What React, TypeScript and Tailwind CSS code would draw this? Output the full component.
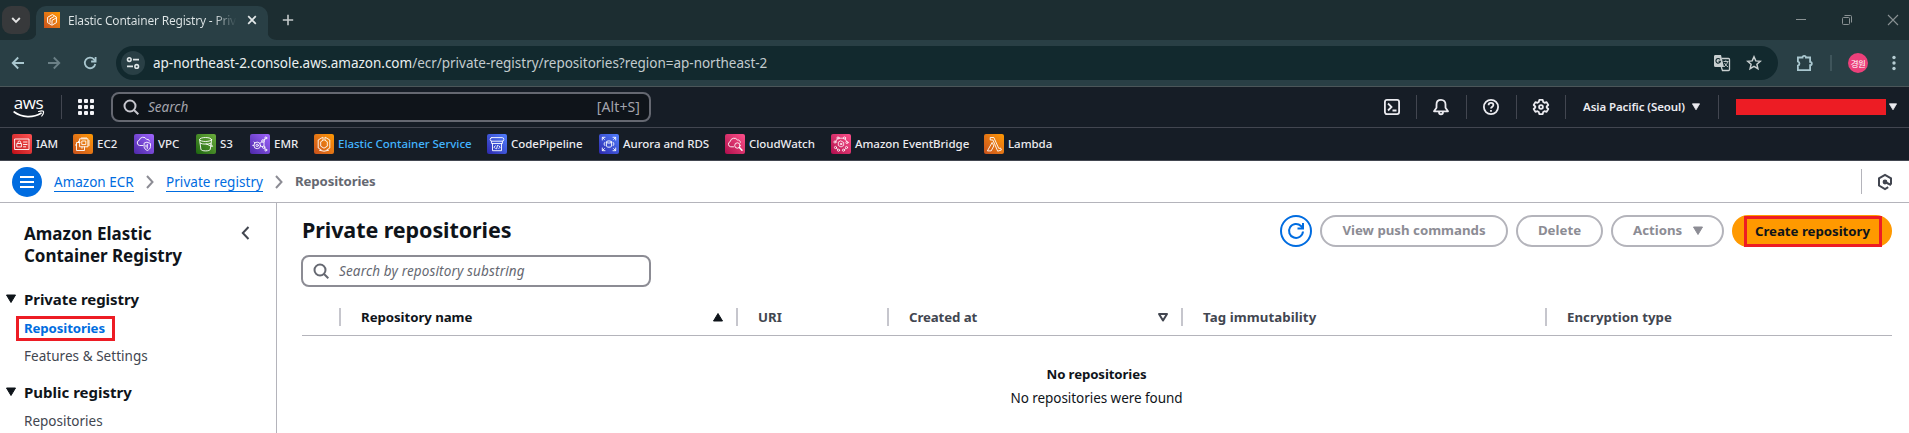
import type { ReactNode } from 'react';

const Favicon = ({ children, tone, size = 20 }: { children: ReactNode; tone: string; size?: number }) => (
  <span className={`flex shrink-0 items-center justify-center bg-linear-to-tr ${tone}`}>
    <svg width={size} height={size} viewBox="0 0 20 20" fill="none" stroke="#fff" strokeWidth="0.9" strokeLinejoin="round" strokeLinecap="round">
      {children}
    </svg>
  </span>
);

const RED = 'from-[#bd0816] to-[#ff5252] rounded-xs';
const ORANGE = 'from-[#c8511b] to-[#ff9900] rounded-xs';
const PURPLE = 'from-[#4d27a8] to-[#a166ff] rounded-xs';
const GREEN = 'from-[#1b660f] to-[#6cae3e] rounded-xs';
const BLUE = 'from-[#2e27ad] to-[#527fff] rounded-xs';
const PINK = 'from-[#b0084d] to-[#ff4f8b] rounded-xs';

const services = [
  { name: 'IAM', w: 'w-[61px]', tone: RED, icon: (
    <>
      <rect x="3" y="5" width="14" height="10.5" />
      <rect x="5.2" y="9.5" width="4.2" height="3.4" />
      <path d="M6 9.5V8.3a1.3 1.3 0 0 1 2.6 0v1.2M11.5 8h3.5M11.5 10.5h3.5M11.5 12.8h2.2" />
    </>
  ) },
  { name: 'EC2', w: 'w-[61px]', tone: ORANGE, icon: (
    <>
      <rect x="7" y="4.8" width="8" height="8" />
      <path d="M7 8.5H3.5v8h8v-3.7M9 4.8V3.4M11 4.8V3.4M13 4.8V3.4M15 7h1.6M15 9h1.6M15 11h1.6M9 12.8v1.5M5.5 8.5V7.2M3.5 11H2.4" />
      <rect x="9.2" y="7" width="3.6" height="3.6" />
    </>
  ) },
  { name: 'VPC', w: 'w-[62px]', tone: PURPLE, icon: (
    <>
      <path d="M9 11.5H5.7A2.7 2.7 0 0 1 5.3 6.2 3.9 3.9 0 0 1 12.6 5.400 2.300 2.300 0 0 1 15.500 7" />
      <path d="M13.300 8.300l3.200 1.200v3c0 2-1.500 3.200-3.200 4-1.700-.8-3.200-2-3.200-4v-3zM13.300 10.300v4.200M12 11.300v1.700" />
    </>
  ) },
  { name: 'S3', w: 'w-[54px]', tone: GREEN, icon: (
    <>
      <ellipse cx="9.600" cy="5.500" rx="6" ry="2" />
      <path d="M3.600 5.700l1.300 9.600c.2 1 2.200 1.600 4.700 1.600s4.500-.6 4.700-1.600l1.300-9.600M10 9.800l5 2.300c1.800.8 2.300.2 1-.8l-1-.6" />
      <path d="M4.200 9.200c2.500 1.300 8.300 1.300 10.900 0" />
    </>
  ) },
  { name: 'EMR', w: 'w-[64px]', tone: PURPLE, icon: (
    <>
      <circle cx="7.200" cy="11.400" r="3.300" />
      <circle cx="7.200" cy="11.400" r="1.200" />
      <circle cx="13" cy="7" r="1.300" />
      <circle cx="15.800" cy="4" r="1" />
      <circle cx="13.700" cy="13.200" r="1.200" />
      <circle cx="15.800" cy="16" r="1" />
      <path d="M9.800 9.400l2.200-1.600M14 6l1.200-1.200M10.400 12l2.200.7M14.500 14.100l.8 1M14 8.300v3.600M4 11.400H2.700M5 8.900l-.9-.9" />
    </>
  ) },
  { name: 'Elastic Container Service', w: 'w-[173px]', tone: ORANGE, active: true, icon: (
    <>
      <path d="M8.500 3.400L4.200 6v8l3 1.800M11.500 3.400L15.800 6v8l-3 1.800M5.500 16.300l4.500.9 4.500-.9" />
      <path d="M9 6.300L6.700 7.800v4.400L10 14.200l3.300-2V7.800L11 6.300M9 3.600v2.700M11 3.600v2.700" />
    </>
  ) },
  { name: 'CodePipeline', w: 'w-[112px]', tone: BLUE, icon: (
    <>
      <rect x="3.200" y="3.600" width="13.600" height="3.600" rx="1.600" />
      <path d="M4.600 7.200v2.300h10.800V7.200M5.500 9.500v7.200h9V9.500M8.300 11.800L7 13.200l1.300 1.300M11.800 11.800l1.300 1.400-1.300 1.300M10.500 11.500l-.9 3.300" />
    </>
  ) },
  { name: 'Aurora and RDS', w: 'w-[126px]', tone: BLUE, icon: (
    <>
      <path d="M3.300 6V3.300H6M3.500 3.500l1.900 1.900M14 3.300h2.700V6M16.500 3.500l-1.900 1.900M3.300 14v2.700H6M3.500 16.500l1.900-1.900M14 16.700h2.700V14M16.500 16.500l-1.900-1.900" />
      <ellipse cx="10" cy="8" rx="2.600" ry="1.100" />
      <path d="M7.400 8v4c0 .7 1.200 1.200 2.600 1.200s2.600-.5 2.600-1.200V8M5.700 8.500c-.8 1-.8 2 0 3M14.300 8.500c.8 1 .8 2 0 3" />
    </>
  ) },
  { name: 'CloudWatch', w: 'w-[106px]', tone: PINK, icon: (
    <>
      <path d="M8.500 12.800H5.700a2.700 2.700 0 0 1-.5-5.200A4 4 0 0 1 12.500 6a2.400 2.400 0 0 1 2.900 2.300" />
      <circle cx="12.400" cy="11.500" r="2.700" />
      <path d="M14.400 13.400l2.600 2.900" strokeWidth="1.500" />
    </>
  ) },
  { name: 'Amazon EventBridge', w: 'w-[153px]', tone: PINK, icon: (
    <g strokeWidth="0.8">
      <path d="M10 7l2.700 1.500v3L10 13l-2.700-1.500v-3z" />
      <circle cx="10" cy="10" r="0.800" />
      <circle cx="7" cy="4" r="1.100" /><circle cx="13.500" cy="4" r="1.100" />
      <circle cx="4" cy="8" r="1.100" /><circle cx="16" cy="8.500" r="1.100" />
      <circle cx="4.500" cy="13.500" r="1.100" /><circle cx="15.500" cy="13.500" r="1.100" />
      <circle cx="7.500" cy="16.200" r="1.100" /><circle cx="12.500" cy="16.200" r="1.100" />
      <path d="M8.100 4.200l4.300 0M4.800 7.200l1.600-2.300M15.600 7.400l-1.400-2.500M5.400 14.300l1.300 1.100M13.500 15.700l1.200-1.200" />
    </g>
  ) },
  { name: 'Lambda', w: 'w-[70px]', tone: ORANGE, icon: (
    <path d="M6.600 3.500h3.200l5 11 1.700-.5.900 2-3.700 1.200L8.900 6H6.600zM8.300 8.800l1.500 3.100-2.600 5H3.800z" />
  ) },
];

const NavDivider = () => <span className="h-[24px] w-px shrink-0 bg-[#424650]" />;

const Caret = ({ fill, size = 8, up = false }: { fill: string; size?: number; up?: boolean }) => (
  <svg width={size} height={size} viewBox="0 0 10 10" fill={fill} className="shrink-0" stroke={fill} strokeWidth="1" strokeLinejoin="round">
    <path d={up ? 'M5 1.500l4.500 7.500h-9z' : 'M.5 1h9L5 8.500z'} />
  </svg>
);

const Magnifier = ({ color }: { color: string }) => (
  <svg width="16" height="16" viewBox="0 0 16 16" fill="none" stroke={color} strokeWidth="2" className="shrink-0">
    <circle cx="7" cy="7" r="5.500" />
    <path d="M11 11l4.300 4.300" />
  </svg>
);

function BrowserChrome() {
  return (
    <div className="h-[87px] bg-[#1c2d31]">
      <div className="flex h-[40px] items-start">
        <div className="ml-[2px] mt-[6px] flex h-[28px] w-[28px] items-center justify-center rounded-[9px] bg-[#37393b]">
          <svg width="10" height="10" viewBox="0 0 10 10" fill="none" stroke="#e3e3e3" strokeWidth="1.900"><path d="M1.200 3l3.800 3.800L8.800 3" /></svg>
        </div>
        <svg width="10" height="34" className="-mr-px ml-[-3px] mt-[6px] shrink-0" viewBox="0 0 10 34"><path d="M10 24v10H0c6 0 10-4 10-10z" fill="#293f45" /></svg>
        <div className="mt-[6px] flex h-[34px] w-[232px] shrink-0 items-start rounded-t-[10px] bg-[#293f45]">
          <span className="ml-[8px] mt-[6px] flex">
            <Favicon tone="from-[#c8511b] to-[#ff9900]" size={16}>
              <g strokeWidth="1.200">
                <path d="M10 3.500L4.500 6.700v6.600L10 16.500l5.500-3.200V6.700z" />
                <path d="M7.500 13V8.500L12.500 5.700M10 15v-4.500l4.500-2.700" />
              </g>
            </Favicon>
          </span>
          <span className="ml-[8px] mt-[5px] w-[172px] overflow-hidden whitespace-nowrap bg-linear-to-r from-[#dfe6e7] from-85% to-transparent to-98% bg-clip-text text-[12px] leading-[20px] tracking-[-0.2px] text-transparent">
            Elastic Container Registry - Priv
          </span>
          <svg width="10" height="10" viewBox="0 0 10 10" className="ml-[7px] mt-[9px]" fill="none" stroke="#e3e8e9" strokeWidth="1.700"><path d="M1.200 1.200l7.600 7.600M8.800 1.200L1.200 8.800" /></svg>
        </div>
        <svg width="10" height="34" className="-ml-px mt-[6px] shrink-0" viewBox="0 0 10 34"><path d="M0 24v10h10C4 34 0 30 0 24z" fill="#293f45" /></svg>
        <svg width="12" height="12" viewBox="0 0 12 12" className="ml-[5px] mt-[14px]" fill="none" stroke="#c3c9ca" strokeWidth="1.600"><path d="M6 .8v10.400M.8 6h10.400" /></svg>
        <div className="ml-auto mr-[10px] mt-[14px] flex gap-[34px]">
          <svg width="12" height="12" viewBox="0 0 12 12" stroke="#8a9294"><path d="M1 5.500h10" /></svg>
          <svg width="12" height="12" viewBox="0 0 12 12" fill="none" stroke="#8a9294"><rect x="1.500" y="3.500" width="7" height="7" rx="1" /><path d="M3.500 1.500h6a1 1 0 0 1 1 1v6" /></svg>
          <svg width="12" height="12" viewBox="0 0 12 12" fill="none" stroke="#8a9294" strokeWidth="1.100"><path d="M1 1l10 10M11 1L1 11" /></svg>
        </div>
      </div>
      <div className="flex h-[47px] items-center border-b border-[#4b5659] bg-[#293f45]">
        <svg width="14" height="14" viewBox="0 0 14 14" className="ml-[11px]" fill="none" stroke="#a9c7cf" strokeWidth="1.800"><path d="M13 7H2M7.200 1.500L1.700 7l5.500 5.500" /></svg>
        <svg width="14" height="14" viewBox="0 0 14 14" className="ml-[22px]" fill="none" stroke="#6b8086" strokeWidth="1.800"><path d="M1 7h11M6.800 1.500L12.300 7l-5.500 5.500" /></svg>
        <svg width="14" height="14" viewBox="0 0 14 14" className="ml-[22px]" fill="none" stroke="#a9c7cf" strokeWidth="1.800"><path d="M12.300 8A5.300 5.300 0 1 1 11 3.300l1.400 1.500" /><path d="M12.600 1v4.500H8.100" /></svg>
        <div className="ml-[19px] flex h-[34px] w-[1662px] shrink-0 items-center rounded-full bg-[#12292e]">
          <span className="ml-[5px] flex h-[24px] w-[24px] items-center justify-center rounded-full bg-[#293f45]">
            <svg width="14" height="14" viewBox="0 0 14 14" fill="none" stroke="#dfe6e7" strokeWidth="1.600"><circle cx="3.300" cy="3.600" r="1.800" /><path d="M7 3.600h6M1 10.400h6" /><circle cx="10.700" cy="10.400" r="1.800" /></svg>
          </span>
          <span className="ml-[8px] whitespace-nowrap text-[13.500px] tracking-[-0.020px] text-[#c3ccce]">
            <span className="text-[#eaf0f1]">ap-northeast-2.console.aws.amazon.com</span>/ecr/private-registry/repositories?region=ap-northeast-2
          </span>
          <span className="ml-auto mr-[16px] flex items-center gap-[15px]">
            <svg width="18" height="18" viewBox="0 0 18 18">
              <path d="M2 1h6l3 12H2.500A1.500 1.500 0 0 1 1 11.500V2.500A1.500 1.500 0 0 1 2 1z" fill="#c8cfd0" />
              <path d="M9 4.500h6.500a1 1 0 0 1 1 1v10a1 1 0 0 1-1 1H9.500L8.300 13" fill="none" stroke="#c8cfd0" strokeWidth="1.300" />
              <path d="M7 5.300A2.300 2.300 0 1 0 7.500 7.200H5.500" fill="none" stroke="#12292e" strokeWidth="1.100" />
              <path d="M10.500 7.500h5M12.800 6.300v1.200M14.700 7.500c-.6 2.500-2 4.200-3.700 5.300M11.500 9c.8 1.800 2 3 3.600 4" fill="none" stroke="#c8cfd0" strokeWidth=".9" />
            </svg>
            <svg width="16" height="16" viewBox="0 0 16 16" fill="none" stroke="#c8cfd0" strokeWidth="1.500"><path d="M8 1.800l1.800 4.100 4.500.4-3.400 3 1 4.400L8 11.300l-3.900 2.400 1-4.400-3.400-3 4.500-.4z" /></svg>
          </span>
        </div>
        <svg width="18" height="18" viewBox="0 0 18 18" className="ml-[18px]" fill="none" stroke="#a9c7cf" strokeWidth="1.800"><path d="M1.900 3.500h4.600a1.700 1.700 0 0 1 3.400 0h4.200v4.300a1.700 1.700 0 0 1 0 3.400v4.900H1.900v-4.400a2.200 2.200 0 0 0 0-4.200z" /></svg>
        <span className="ml-[16px] h-[16px] w-[2px] bg-[#3f555b]" />
        <span className="ml-[16px] flex h-[20px] w-[20px] shrink-0 items-center justify-center whitespace-nowrap rounded-full bg-[#ec407a] font-['Noto_Sans_CJK_KR',sans-serif] text-[8.500px] leading-none tracking-[-0.500px] text-white">경원</span>
        <svg width="6" height="16" viewBox="0 0 6 16" className="ml-[23px]" fill="#b6cdd3"><circle cx="3" cy="2.500" r="1.700" /><circle cx="3" cy="8" r="1.700" /><circle cx="3" cy="13.500" r="1.700" /></svg>
      </div>
    </div>
  );
}

function ConsoleHeader() {
  return (
    <div className="h-[74px] bg-[#161d26] text-[#ebebf0]">
      <div className="flex h-[41px] items-center border-b border-[#424650]">
        <span className="ml-[12px] flex w-[33px] flex-col items-center">
          <span className="h-[13px] font-['Open_Sans'] text-[17px] font-medium leading-[11px] tracking-[-0.400px] text-white">aws</span>
          <svg width="32" height="8" viewBox="0 0 32 8" fill="none" stroke="#fff" strokeWidth="1.700" strokeLinecap="round"><path d="M1.200 2C9 7.700 20 8 28 3.200" /><path d="M25.600 1.500c2-.7 4-.8 4.700-.3.500.8-.3 3.200-1.500 4.800" strokeWidth="1.200" /></svg>
        </span>
        <span className="ml-[16px] mr-[16px] flex"><NavDivider /></span>
        <span className="grid grid-cols-3 gap-[2px]">
          {Array.from({ length: 9 }, (_, i) => <span key={i} className="h-[4px] w-[4px] rounded-[1px] bg-[#f3f3f7]" />)}
        </span>
        <div className="ml-[17px] flex h-[30px] w-[540px] shrink-0 items-center rounded-[8px] border-2 border-[#656871] bg-[#0f141a] pl-[10px] pr-[9px]">
          <Magnifier color="#c6c6cd" />
          <span className="ml-[9px] text-[13.500px] italic text-[#a4a4ad]">Search</span>
          <span className="ml-auto mt-[-2px] text-[14px] tracking-[0.100px] text-[#a4a4ad]">[Alt+S]</span>
        </div>
        <svg width="18" height="18" viewBox="0 0 18 18" className="ml-[732px]" fill="none" stroke="#ebebf0" strokeWidth="1.800"><rect x="1.900" y="1.900" width="14.200" height="14.200" rx="2" /><path d="M5 5.500L8.500 9 5 12.500M9.500 12.500h4" /></svg>
        <span className="mx-[15px] flex"><NavDivider /></span>
        <svg width="18" height="18" viewBox="0 0 18 18" fill="none" stroke="#ebebf0" strokeWidth="1.800" strokeLinejoin="round"><path d="M9 1.900c-2.900 0-4.500 2-4.500 4.500v3.300L2 13.300h14l-2.500-3.600V6.400C13.500 3.900 11.900 1.900 9 1.900zM7 14c0 1.500.9 2.300 2 2.300s2-.8 2-2.300" /></svg>
        <span className="ml-[16px] mr-[15px] flex"><NavDivider /></span>
        <svg width="18" height="18" viewBox="0 0 18 18" fill="none" stroke="#ebebf0" strokeWidth="1.800"><circle cx="9" cy="9" r="7.100" /><path d="M6.600 7.200c0-1.400 1-2.300 2.400-2.300s2.400.9 2.400 2.100c0 1.700-2.400 1.700-2.400 3.600M9 11.900v1.800" /></svg>
        <span className="ml-[16px] mr-[15px] flex"><NavDivider /></span>
        <svg width="18" height="18" viewBox="0 0 18 18" fill="none" stroke="#ebebf0" strokeWidth="1.800" strokeLinejoin="round"><path d="M7.300 1.900h3.400l.5 2.100 1.300.8 2.100-.7 1.700 2.900-1.600 1.500v1l1.600 1.500-1.700 2.900-2.100-.7-1.300.8-.5 2.100H7.300L6.800 14l-1.300-.8-2.100.7L1.700 11l1.600-1.500v-1L1.700 7l1.700-2.900 2.100.7L6.800 4z" /><circle cx="9" cy="9" r="1.900" /></svg>
        <span className="ml-[15px] mr-[17px] flex"><NavDivider /></span>
        <span className="w-[103px] whitespace-nowrap text-[11.500px] font-semibold tracking-[-0.090px]">Asia Pacific (Seoul)</span>
        <span className="ml-[6px]"><Caret fill="#ebebf0" /></span>
        <span className="ml-[18px] mr-[17px] flex"><NavDivider /></span>
        <span className="h-[16px] w-[150px] shrink-0 bg-[#ed1c24]" />
        <span className="ml-[3px]"><Caret fill="#ebebf0" /></span>
      </div>
      <div className="flex h-[33px] items-center border-b border-[#424650] pl-[12px]">
        {services.map((s) => (
          <span key={s.name} className={`flex shrink-0 items-center gap-[4px] ${s.w}`}>
            <Favicon tone={s.tone}>{s.icon}</Favicon>
            <span className={`whitespace-nowrap text-[11.500px] font-medium ${s.active ? 'text-[#42b4ff]' : 'text-[#ebebf0]'} tracking-[-0.030px]`}>{s.name}</span>
          </span>
        ))}
      </div>
    </div>
  );
}

const Chevron = () => (
  <svg width="8" height="14" viewBox="0 0 8 14" fill="none" stroke="#8c8c94" strokeWidth="2" className="shrink-0"><path d="M1 1l5.500 6L1 13" /></svg>
);

function Breadcrumbs() {
  return (
    <div className="flex h-[42px] items-center border-b border-[#b4b4bb] text-[13.500px] text-[#006ce0]">
      <span className="ml-[12px] flex h-[30px] w-[30px] flex-col items-center justify-center gap-[3px] rounded-full bg-[#006ce0]">
        <span className="h-[2px] w-[14px] bg-white" />
        <span className="h-[2px] w-[14px] bg-white" />
        <span className="h-[2px] w-[14px] bg-white" />
      </span>
      <a className="ml-[12px] mt-[2px] w-[80px] whitespace-nowrap border-b border-[#006ce0] leading-[18px]">Amazon ECR</a>
      <span className="ml-[12px] mr-[12px]"><Chevron /></span>
      <a className="mt-[2px] w-[97px] whitespace-nowrap border-b border-[#006ce0] leading-[18px] tracking-[0.050px]">Private registry</a>
      <span className="ml-[12px] mr-[12px]"><Chevron /></span>
      <span className="mt-px text-[13.250px] font-bold tracking-[-0.150px] text-[#656871]">Repositories</span>
      <span className="ml-auto h-[25px] w-px bg-[#b4b4bb]" />
      <svg width="16" height="18" viewBox="0 0 16 18" className="ml-[15px] mr-[16px]" fill="none" stroke="#424650" strokeWidth="2"><path d="M14 11.500V5.300L8 1.900 2 5.300v7.200l6 3.500 3.200-1.900" /><circle cx="8" cy="9" r="1.400" fill="#424650" /><path d="M8 9l6 3" /></svg>
    </div>
  );
}

function SideNav() {
  return (
    <div className="w-[277px] shrink-0 border-r border-[#b4b4bb] pl-[24px] pt-[20px]">
      <div className="flex">
        <h2 className="w-[217px] whitespace-nowrap text-[17px] font-bold leading-[22px] text-[#0f141a]">
          Amazon Elastic<br /><span className="tracking-[-0.050px]">Container Registry</span>
        </h2>
        <svg width="9" height="14" viewBox="0 0 9 14" className="mt-[3px]" fill="none" stroke="#424650" strokeWidth="2"><path d="M7.500 1L1.800 7l5.700 6" /></svg>
      </div>
      <div className="ml-[-18px] mt-[22px] flex h-[20px] items-center">
        <Caret fill="#0f141a" size={10} />
        <h3 className="ml-[8px] text-[15px] font-bold tracking-[-0.060px] text-[#0f141a]">Private registry</h3>
      </div>
      <div className="ml-[-8px] mt-[7px] flex h-[25px] w-[99px] items-center border-[3px] border-[#ed1c24] pl-[5px]">
        <span className="text-[13.250px] font-bold tracking-[-0.120px] text-[#006ce0]">Repositories</span>
      </div>
      <div className="mt-[5px] text-[13.500px] leading-[20px] tracking-[0.040px] text-[#424650]">Features &amp; Settings</div>
      <div className="ml-[-18px] mt-[16px] flex h-[20px] items-center">
        <Caret fill="#0f141a" size={10} />
        <h3 className="ml-[8px] text-[15px] font-bold text-[#0f141a]">Public registry</h3>
      </div>
      <div className="mt-[9px] h-[20px] text-[13.500px] leading-[20px] text-[#424650]">Repositories</div>
    </div>
  );
}

const Sep = () => <span className="mb-px h-[18px] w-[2px] shrink-0 bg-[#c6c6cd]" />;

function Repositories() {
  return (
    <div className="ml-[24px] w-[1591px]">
      <div className="mt-[12px] flex h-[32px] w-full items-center text-[13.250px] font-bold text-[#8c8c94]">
        <h1 className="ml-px mt-[-2px] w-[978px] whitespace-nowrap text-[21.500px] leading-[32px] tracking-[-0.080px] text-[#0f141a]">Private repositories</h1>
        <span className="flex h-[32px] w-[32px] shrink-0 items-center justify-center rounded-full border-2 border-[#006ce0]">
          <svg width="18" height="18" viewBox="0 0 18 18" fill="none" stroke="#006ce0" strokeWidth="2"><path d="M16 9.500a7 7 0 1 1-2-5.500l1.800 2" /><path d="M16 1v5.500h-5.500" /></svg>
        </span>
        <span className="ml-[8px] flex h-[32px] w-[188px] shrink-0 items-center justify-center rounded-full border-2 border-[#b4b4bb]">View push commands</span>
        <span className="ml-[8px] flex h-[32px] w-[87px] shrink-0 items-center justify-center rounded-full border-2 border-[#b4b4bb]">Delete</span>
        <span className="ml-[8px] flex h-[32px] w-[113px] shrink-0 items-center rounded-full border-2 border-[#b4b4bb] pl-[20px]">
          Actions
          <span className="ml-[11px]"><Caret fill="#8c8c94" size={10} /></span>
        </span>
        <span className="ml-[8px] flex h-[32px] w-[160px] shrink-0 items-center rounded-full bg-[#ff9900] pl-[12px] text-[#0f141a]">
          <span className="mt-px flex h-[31px] w-[138px] items-center justify-center border-[3px] border-[#ed1c24] pr-px tracking-[-0.020px]">Create repository</span>
        </span>
      </div>
      <div className="mt-[8px] flex h-[32px] w-[350px] items-center rounded-[8px] border-2 border-[#8c8c94] pl-[10px]">
        <Magnifier color="#656871" />
        <span className="ml-[10px] text-[13.500px] italic tracking-[0.150px] text-[#656871]">Search by repository substring</span>
      </div>
      <div className="ml-px mt-[12px] flex h-[37px] items-center border-b border-[#b4b4bb] pl-[37px] text-[13.250px] font-bold text-[#424650]">
        <span className="flex h-full w-[397px] items-center">
          <Sep />
          <span className="ml-[20px] mt-px tracking-[-0.060px] text-[#0f141a]">Repository name</span>
          <span className="ml-auto mr-[13px]"><Caret fill="#0f141a" size={10} up /></span>
        </span>
        <span className="flex h-full w-[151px] items-center"><Sep /><span className="ml-[20px] mt-px">URI</span></span>
        <span className="flex h-full w-[294px] items-center">
          <Sep />
          <span className="ml-[20px] mt-px tracking-[-0.100px]">Created at</span>
          <svg width="12" height="11" viewBox="0 0 12 11" className="ml-auto mr-[12px]" fill="none" stroke="#424650" strokeWidth="2" strokeLinejoin="round"><path d="M2 2h8L6 8.500z" /></svg>
        </span>
        <span className="flex h-full w-[364px] items-center"><Sep /><span className="ml-[20px] mt-px tracking-[0.080px]">Tag immutability</span></span>
        <span className="flex h-full items-center"><Sep /><span className="ml-[20px] mt-px tracking-[0.040px]">Encryption type</span></span>
      </div>
      <div className="flex flex-col items-center pt-[28px] text-[#0f141a]">
        <span className="text-[13.250px] font-bold leading-[20px] tracking-[-0.120px]">No repositories</span>
        <span className="mt-[4px] text-[13.500px] leading-[20px] tracking-[-0.050px]">No repositories were found</span>
      </div>
    </div>
  );
}

export default function App() {
  return (
    <div className="flex h-[433px] w-[1909px] flex-col overflow-hidden bg-white font-['Noto_Sans','Open_Sans',sans-serif]">
      <BrowserChrome />
      <ConsoleHeader />
      <Breadcrumbs />
      <div className="flex flex-1 overflow-hidden">
        <SideNav />
        <Repositories />
      </div>
    </div>
  );
}
